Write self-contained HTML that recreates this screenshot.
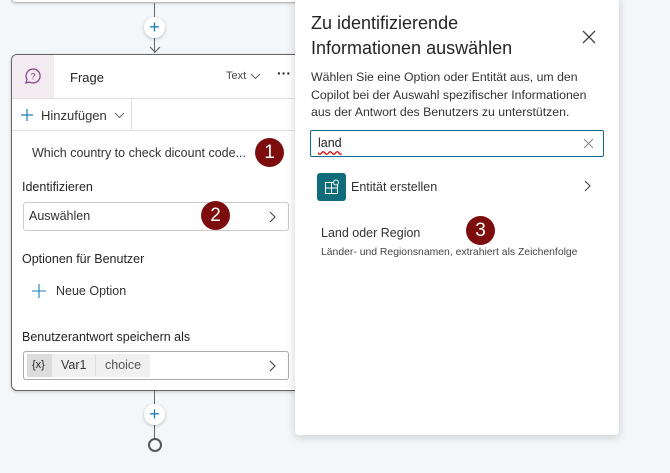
<!DOCTYPE html>
<html><head><meta charset="utf-8"><style>
*{box-sizing:border-box;margin:0;padding:0}
body{width:670px;height:473px;background:#f4f7fa;font-family:"Liberation Sans",sans-serif;position:relative;overflow:hidden;color:#242424}
.abs{position:absolute}
.badge{position:absolute;width:29px;height:29px;border-radius:50%;background:#7d0c0c;color:#fff;font-size:19px;text-align:center;line-height:29px}
.plus{position:absolute;width:21px;height:21px;border-radius:50%;background:#fff;box-shadow:0 1px 3px rgba(0,0,0,.25);color:#1a7fb5;font-size:18px;text-align:center;line-height:20px}
</style></head><body>
<div class="abs" style="left:11px;top:-6px;width:290px;height:9px;background:#fff;border:1px solid #bbb;border-radius:6px;box-shadow:0 1px 2px rgba(0,0,0,.15)"></div>
<div class="abs" style="left:154px;top:3px;width:1px;height:50px;background:#666"></div>
<svg class="abs" style="left:149px;top:44px" width="12" height="10"><path d="M1 3 L6 8 L11 3" fill="none" stroke="#666" stroke-width="1.2"/></svg>
<div class="plus" style="left:144px;top:17px">+</div>
<div class="abs" style="left:11px;top:54px;width:295px;height:337px;background:#fff;border:1px solid #666;border-radius:6px;box-shadow:0 1px 3px rgba(0,0,0,.2)">
 <div class="abs" style="left:0;top:0;width:42px;height:43px;background:#f2ebf0;border-radius:5px 0 0 0"></div>
 <svg class="abs" style="left:12px;top:12px" width="18" height="18"><path d="M9 2a7 7 0 1 1-3.5 13L2 16l1-3.5A7 7 0 0 1 9 2z" fill="none" stroke="#8a3d8a" stroke-width="1.2"/><text x="9" y="12.5" font-size="9" text-anchor="middle" fill="#8a3d8a" font-family="Liberation Sans">?</text></svg>
 <div class="abs" style="left:58px;top:15px;font-size:13px">Frage</div>
 <div class="abs" style="left:214px;top:15px;font-size:11px;color:#444">Text</div>
 <svg class="abs" style="left:238px;top:18px" width="11" height="7"><path d="M1 1L5.5 5.5L10 1" fill="none" stroke="#666" stroke-width="1"/></svg>
 <div class="abs" style="left:265px;top:10px;font-size:14px;font-weight:bold">···</div>
 <div class="abs" style="left:0;top:43px;width:295px;height:1px;background:#e0e0e0"></div>
 <svg class="abs" style="left:9px;top:54px" width="12" height="12"><path d="M6 0v12M0 6h12" stroke="#1a7fb5" stroke-width="1.2"/></svg>
 <div class="abs" style="left:29px;top:53px;font-size:13px;color:#333">Hinzufügen</div>
 <svg class="abs" style="left:102px;top:57px" width="11" height="7"><path d="M1 1L5.5 5.5L10 1" fill="none" stroke="#666" stroke-width="1"/></svg>
 <div class="abs" style="left:119px;top:44px;width:1px;height:31px;background:#e0e0e0"></div>
 <div class="abs" style="left:0;top:75px;width:295px;height:1px;background:#e0e0e0"></div>
 <div class="abs" style="left:20px;top:91px;font-size:12.5px;color:#333">Which country to check dicount code...</div>
 <div class="abs" style="left:10px;top:125px;font-size:12.5px">Identifizieren</div>
 <div class="abs" style="left:11px;top:147px;width:266px;height:29px;border:1px solid #ccc;border-radius:3px"></div>
 <div class="abs" style="left:17px;top:154px;font-size:12.5px;color:#333">Auswählen</div>
 <svg class="abs" style="left:257px;top:156px" width="8" height="12"><path d="M1 1 L6 6 L1 11" fill="none" stroke="#444" stroke-width="1.1"/></svg>
 <div class="abs" style="left:10px;top:197px;font-size:12.5px">Optionen für Benutzer</div>
 <svg class="abs" style="left:20px;top:229px" width="14" height="14"><path d="M7 0v14M0 7h14" stroke="#1a7fb5" stroke-width="1.1"/></svg>
 <div class="abs" style="left:44px;top:229px;font-size:12.5px;color:#333">Neue Option</div>
 <div class="abs" style="left:10px;top:275px;font-size:12.5px">Benutzerantwort speichern als</div>
 <div class="abs" style="left:11px;top:296px;width:266px;height:29px;border:1px solid #aaa;border-radius:3px"></div>
 <div class="abs" style="left:15px;top:299px;width:123px;height:23px;background:#f0f0f0"></div>
 <div class="abs" style="left:15px;top:299px;width:25px;height:23px;background:#dcdcdc"></div>
 <div class="abs" style="left:20px;top:304px;font-size:11px">{x}</div>
 <div class="abs" style="left:49px;top:303px;font-size:12.5px;color:#333">Var1</div>
 <div class="abs" style="left:83px;top:300px;width:1px;height:21px;background:#ddd"></div>
 <div class="abs" style="left:93px;top:303px;font-size:12.5px;color:#555">choice</div>
 <svg class="abs" style="left:257px;top:305px" width="8" height="12"><path d="M1 1 L6 6 L1 11" fill="none" stroke="#444" stroke-width="1.1"/></svg>
</div>
<div class="abs" style="left:154px;top:391px;width:1px;height:47px;background:#666"></div>
<div class="plus" style="left:144px;top:404px">+</div>
<div class="abs" style="left:148px;top:438px;width:14px;height:14px;border:2px solid #555;border-radius:50%;background:#f4f7fa"></div>
<div class="abs" style="left:295px;top:-4px;width:324px;height:439px;background:#fff;border-radius:4px;box-shadow:0 2px 10px rgba(0,0,0,.18)">
 <div class="abs" style="left:16px;top:15px;font-size:18px;line-height:25px;color:#242424;width:240px">Zu identifizierende Informationen auswählen</div>
 <svg class="abs" style="left:287px;top:34px" width="14" height="14"><path d="M1 1L13 13M13 1L1 13" stroke="#444" stroke-width="1.3"/></svg>
 <div class="abs" style="left:16px;top:73px;font-size:12.3px;line-height:17.5px;color:#333;width:288px">Wählen Sie eine Option oder Entität aus, um den Copilot bei der Auswahl spezifischer Informationen aus der Antwort des Benutzers zu unterstützen.</div>
 <div class="abs" style="left:15px;top:134px;width:294px;height:27px;border:1px solid #0f6c8f;border-radius:2px"></div>
 <div class="abs" style="left:23px;top:140px;font-size:12.5px;text-decoration:underline wavy #d00;text-underline-offset:3px">land</div>
 <svg class="abs" style="left:288px;top:142px" width="11" height="11"><path d="M1 1L10 10M10 1L1 10" stroke="#888" stroke-width="1"/></svg>
 <div class="abs" style="left:22px;top:177px;width:29px;height:28px;background:#0f6c7a;border-radius:3px"></div>
 <svg class="abs" style="left:29px;top:183px" width="16" height="16"><rect x="1.5" y="3.5" width="12" height="11" fill="none" stroke="#fff"/><path d="M7.5 3.5v11M1.5 9h12" stroke="#fff"/><circle cx="12" cy="3.5" r="2.5" fill="#0f6c7a" stroke="#fff"/></svg>
 <div class="abs" style="left:56px;top:184px;font-size:12.5px;color:#333">Entität erstellen</div>
 <svg class="abs" style="left:289px;top:184px" width="8" height="12"><path d="M1 1 L6 6 L1 11" fill="none" stroke="#444" stroke-width="1.1"/></svg>
 <div class="abs" style="left:26px;top:230px;font-size:12.5px;color:#333">Land oder Region</div>
 <div class="abs" style="left:26px;top:251px;font-size:10.4px;color:#444">Länder- und Regionsnamen, extrahiert als Zeichenfolge</div>
</div>
<div class="badge" style="left:255px;top:138px">1</div>
<div class="badge" style="left:201px;top:201px">2</div>
<div class="badge" style="left:466px;top:216px">3</div>
</body></html>
